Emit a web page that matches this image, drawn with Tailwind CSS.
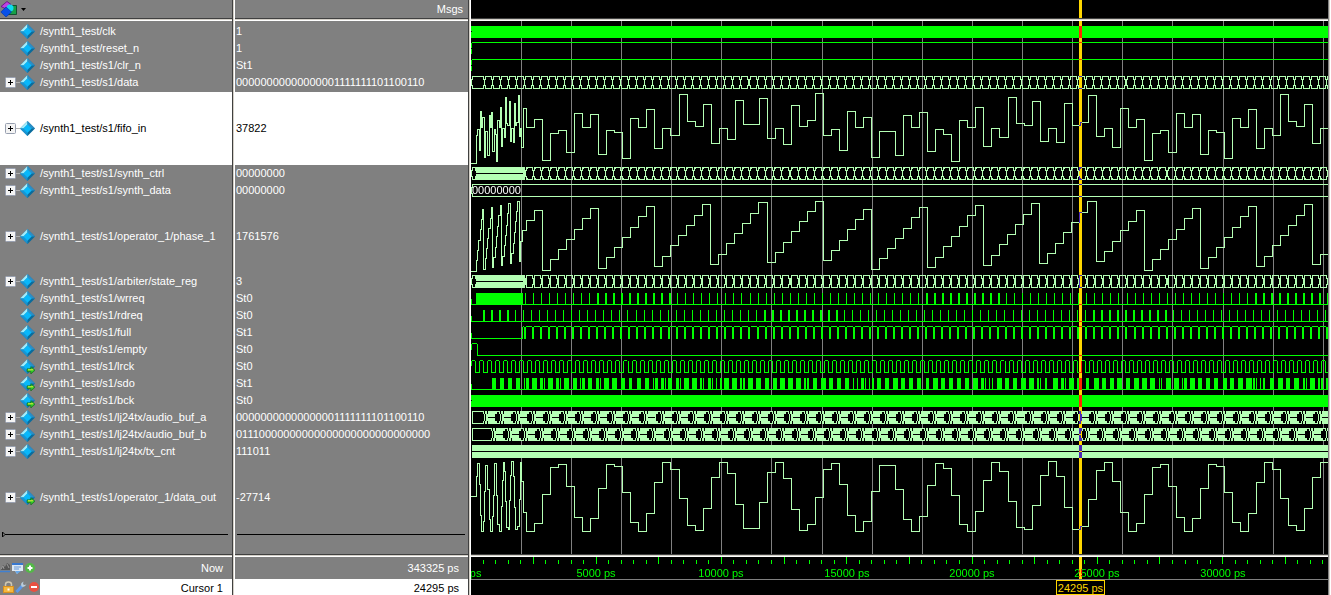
<!DOCTYPE html>
<html lang="en">
<head>
<meta charset="utf-8">
<title>Wave</title>
<script src="https://cdn.jsdelivr.net/npm/@tailwindcss/browser@4"></script>
</head>
<body class="bg-black">
<svg class="hidden" aria-hidden="true">
  <symbol id="gem" viewBox="0 0 16 16">
    <path d="M8 0 16 8 8 16 0 8Z" fill="#0a6c9c"/>
    <path d="M8 0 8 4 4 8 0 8Z" fill="#a4ecfa"/>
    <path d="M8 0 16 8 12 8 8 4Z" fill="#2c8fc6"/>
    <path d="M0 8 4 8 8 12 8 16Z" fill="#1a94d2"/>
    <path d="M8 3.5 12.5 8 8 12.5 3.5 8Z" fill="#08b8fa"/>
  </symbol>
  <symbol id="gem-out" viewBox="0 0 16 16">
    <use href="#gem"/>
    <path d="M7.500 10.500H11.500V8L16 12 11.500 16V13.500H7.500Z" fill="#30c828" stroke="#0a5c18" stroke-width=".6"/>
    <path d="M8.500 11.500H14" stroke="#f0f040"/>
  </symbol>
</svg>

<main class="flex h-screen min-h-[595px] overflow-hidden bg-black font-['Liberation_Sans',Arial,sans-serif] text-[11px] leading-[17px] text-white">

  <!-- Signal names -->
  <section class="flex w-[232px] shrink-0 flex-col bg-[#808080]" aria-label="Signals">
    <header class="flex h-[18px] shrink-0 items-center">
      <button class="flex items-center gap-[3px]" aria-label="Format menu">
        <svg class="h-4 w-[18px]" viewBox="0 0 18 16">
          <path d="M9 4.500H16.500V13.500H8V8Z" fill="#18a048" stroke="#084020" stroke-width=".8"/>
          <path d="M1 5.500 7 .5 11 3.500 6 8Z" fill="#c040e0" stroke="#600880" stroke-width=".8"/>
          <circle cx="10" cy="7" r="3.500" fill="#10d8f0"/>
          <path d="M6 6 11.500 11 6 16 .8 11Z" fill="#0850e8" stroke="#0030a0" stroke-width=".6"/>
        </svg>
        <svg class="mt-px h-[3px] w-[5px]" viewBox="0 0 5 3"><path d="M0 0H5L2.500 3Z"/></svg>
      </button>
    </header>
    <div class="h-[3px] shrink-0 border-t border-b border-t-[#404040] border-b-white bg-[#d4d0c8]"></div>
    <ul id="names" class="shrink-0 pt-[2px]"></ul>
    <div class="flex-1">
      <svg class="-mt-[2px] h-[5px] w-full" aria-hidden="true"><path d="M2.500 0V5L5 2.500 2.500 0M5 2.500H228" fill="none" stroke="#000"/></svg>
    </div>
    <div class="h-[3px] shrink-0 border-t border-b border-t-[#404040] border-b-white bg-[#d4d0c8]"></div>
    <footer class="shrink-0">
      <div class="flex h-[22px] items-center pr-[9px]">
        <div class="flex w-10">
          <button aria-label="Find"><svg class="h-3 w-3" viewBox="0 0 12 12"><path d="M1 8 3 3 5 5 7 1 10 3V8Z" fill="#555"/><path d="M1 7 3 4 4 7M7 2 9 6" stroke="#999" fill="none"/><path d="M0 9.500H10" stroke="#4080d0" stroke-width="1.500"/></svg></button>
          <button aria-label="Edit grid"><svg class="h-3 w-3" viewBox="0 0 12 12"><path d="M0 1H11V9H7L5 12 3 9H0Z" fill="#dce8f4"/><path d="M0 1H11V3H0Z" fill="#3878d0"/><path d="M2 5H9M2 7H7" stroke="#6898d8"/><path d="M3 9H9L5 12Z" fill="#68a8e8"/></svg></button>
          <button aria-label="Add cursor"><svg class="h-3 w-3" viewBox="0 0 12 12"><circle cx="6" cy="6" r="5" fill="#54b848"/><path d="M6 3.500V8.500M3.500 6H8.500" stroke="#fff" stroke-width="2"/></svg></button>
        </div>
        <span class="ml-auto">Now</span>
      </div>
      <div class="flex h-4 items-center bg-white pr-[9px] text-black">
        <div class="flex h-4 w-10 items-center gap-px bg-[#808080] pl-[3px]">
          <button aria-label="Lock cursor"><svg class="h-3 w-[11px]" viewBox="0 0 11 12"><path d="M2.500 6V3.500A3 2.500 0 0 1 8.500 3.500V5" fill="none" stroke="#d0c8b0" stroke-width="1.500"/><rect x=".5" y="5.500" width="10" height="6" fill="#f4b840" stroke="#d89020"/><path d="M5.500 7.500V9.500" stroke="#fff" stroke-width="2"/></svg></button>
          <button aria-label="Edit cursor"><svg class="h-3 w-3" viewBox="0 0 12 12"><path d="M1.500 11 7 5" stroke="#5c98e8" stroke-width="3"/><path d="M8.500 .5Q5 2 6.500 5.500 9 7 11.500 3.500L9 4 8 3Z" fill="#b8ccdc"/></svg></button>
          <button aria-label="Remove cursor"><svg class="h-3 w-3" viewBox="0 0 12 12"><circle cx="6" cy="6" r="5" fill="#e85040"/><path d="M3 6H9" stroke="#fff" stroke-width="2"/></svg></button>
        </div>
        <span class="ml-auto pt-[2px]">Cursor 1</span>
      </div>
    </footer>
  </section>
  <div class="w-[3px] shrink-0 border-r border-l border-r-white border-l-[#404040] bg-[#d4d0c8]"></div>

  <!-- Values at the cursor -->
  <section class="flex w-[233px] shrink-0 flex-col bg-[#808080]" aria-label="Values">
    <header class="h-[18px] shrink-0 pt-px pr-[5px] text-right">Msgs</header>
    <div class="h-[3px] shrink-0 border-t border-b border-t-[#404040] border-b-white bg-[#d4d0c8]"></div>
    <ul id="values" class="shrink-0 pt-[2px]"></ul>
    <div class="flex-1">
      <svg class="-mt-[2px] h-[5px] w-full" aria-hidden="true"><path d="M2 2.500H230" stroke="#000"/></svg>
    </div>
    <div class="h-[3px] shrink-0 border-t border-b border-t-[#404040] border-b-white bg-[#d4d0c8]"></div>
    <footer class="shrink-0 text-right">
      <div class="flex h-[22px] items-center justify-end pr-[9px]">343325 ps</div>
      <div class="flex h-4 items-center justify-end bg-white pt-[2px] pr-[9px] text-black">24295 ps</div>
    </footer>
  </section>
  <div class="w-[3px] shrink-0 border-r border-l border-r-white border-l-[#404040] bg-[#d4d0c8]"></div>

  <!-- Waveforms -->
  <section class="relative isolate flex min-w-0 flex-1 flex-col overflow-hidden bg-black" aria-label="Waveforms">
    <div class="h-[18px] shrink-0"></div>
    <div class="relative z-10 h-[3px] shrink-0 border-t border-b border-t-[#404040] border-b-white bg-[#d4d0c8]"></div>
    <div class="min-h-0 flex-1 overflow-hidden">
      <svg id="waves" width="857" height="533" viewBox="471 21 857 533" shape-rendering="crispEdges" fill="none"></svg>
    </div>
    <div class="relative z-10 h-[3px] shrink-0 border-t border-b border-t-[#404040] border-b-white bg-[#d4d0c8]"></div>
    <div class="h-[22px] shrink-0 overflow-hidden">
      <svg id="ruler" width="857" height="22" viewBox="471 557 857 22" fill="#00ff00"></svg>
    </div>
    <div class="h-4 shrink-0 border-t border-[#808080]"></div>
    <div class="absolute top-0 bottom-4 left-[608px] w-[3px] bg-[#ffd700] mix-blend-difference"></div>
    <div class="absolute bottom-0 left-[585px] flex h-[15px] w-[49px] items-center justify-center border border-[#ffd700] bg-black pt-[2px] text-[#ffd700]">24295 ps</div>
  </section>
  <div class="w-[3px] shrink-0 border-r border-l border-r-white border-l-[#808080] bg-[#d4d0c8]"></div>
</main>

<script>
// name, value, expandable, output, tall (analog), selected
const signals = [
  ['/synth1_test/clk', '1'],
  ['/synth1_test/reset_n', '1'],
  ['/synth1_test/s1/clr_n', 'St1'],
  ['/synth1_test/s1/data', '00000000000000001111111101100110', 1],
  ['/synth1_test/s1/fifo_in', '37822', 1, 0, 1, 1],
  ['/synth1_test/s1/synth_ctrl', '00000000', 1],
  ['/synth1_test/s1/synth_data', '00000000', 1],
  ['/synth1_test/s1/operator_1/phase_1', '1761576', 1, 0, 1],
  ['/synth1_test/s1/arbiter/state_reg', '3', 1],
  ['/synth1_test/s1/wrreq', 'St0'],
  ['/synth1_test/s1/rdreq', 'St0'],
  ['/synth1_test/s1/full', 'St1'],
  ['/synth1_test/s1/empty', 'St0'],
  ['/synth1_test/s1/lrck', 'St0', 0, 1],
  ['/synth1_test/s1/sdo', 'St1', 0, 1],
  ['/synth1_test/s1/bck', 'St0', 0, 1],
  ['/synth1_test/s1/lj24tx/audio_buf_a', '00000000000000001111111101100110', 1],
  ['/synth1_test/s1/lj24tx/audio_buf_b', '01110000000000000000000000000000', 1],
  ['/synth1_test/s1/lj24tx/tx_cnt', '111011', 1],
  ['/synth1_test/s1/operator_1/data_out', '-27714', 1, 1, 1],
];
const rowClass = (tall, selected) =>
  'flex items-center ' + (selected ? 'mt-px h-[73px] bg-white text-black' : tall ? 'h-[74px] pt-px' : 'h-[17px]');
const plus = name => `<button class="ml-[5px] h-[11px] w-[11px]" aria-label="Expand ${name}"><svg class="h-[11px] w-[11px]" viewBox="0 0 11 11"><rect x=".5" y=".5" width="10" height="10" rx="1" fill="#f4f4f4" stroke="#98a0b0"/><path d="M3 5.500H8M5.500 3V8" stroke="#000"/></svg></button><span class="h-px w-1 bg-[#b0b0b0]"></span>`;
document.getElementById('names').innerHTML = signals.map(([n, v, exp, out, tall, sel]) =>
  `<li class="${rowClass(tall, sel)}">${exp ? plus(n) : '<span class="w-5"></span>'}<svg class="h-[15px] w-[15px]"><use href="#${out ? 'gem-out' : 'gem'}"/></svg><span class="pl-[5px] whitespace-nowrap">${n}</span></li>`).join('');
document.getElementById('values').innerHTML = signals.map(([n, v, exp, out, tall, sel]) =>
  `<li class="${rowClass(tall, sel)}"><span class="pl-px">${v}</span></li>`).join('');

const GREEN = '#00ff00', PALE = '#b4ffb4', END = 1328, STEP = 8.0215;
const order = [];
function box(color, x, y, w, h) {
  x = Math.floor(x);
  if (x >= END) return;
  order.push([color, `M${x} ${y}h${Math.min(w, END - x)}v${h}h${-Math.min(w, END - x)}z`]);
}
function flush() {
  let out = '', last = null, d = '';
  for (const [c, p] of order) {
    if (c !== last && d) { out += `<path fill="${last}" d="${d}"/>`; d = ''; }
    last = c; d += p;
  }
  return out + `<path fill="${last}" d="${d}"/>`;
}

// grid
for (let k = 0; k < 17; k++) box('#808080', 521.3 + 50.13 * k, 21, 1, 533);

// clocks and constant levels
box(GREEN, 471, 26, 857, 12);
box(GREEN, 472, 42, 856, 1); box(GREEN, 471, 43, 1, 11);
box(GREEN, 472, 59, 856, 1); box(GREEN, 471, 60, 1, 11);
box(GREEN, 471, 395, 857, 12);
box('#000', 471, 31, 1, 1); box('#000', 471, 400, 1, 1);
box('#000', 471, 48, 1, 1); box('#000', 471, 65, 1, 1);

// bus cells with crossing edges
function cell(y, x0, x1) {
  x0 = Math.floor(x0); x1 = Math.floor(x1);
  const w = x1 - x0;
  box(PALE, x0, y, w, 1); box(PALE, x0, y + 12, w, 1);
  box(PALE, x0, y, 1, 4); box(PALE, x0, y + 9, 1, 4);
  box(PALE, x0 - 1, y + 3, 1, 7);
  if (x1 < END) {
    box(PALE, x1 - 1, y, 1, 4); box(PALE, x1 - 1, y + 9, 1, 4);
    box(PALE, x1, y + 3, 1, 7);
  }
}
cell(76, 472, 484);
for (let k = 0; k < 106; k++) cell(76, 485.3 + STEP * k, 492.3 + STEP * k);
for (const y of [167, 275]) {
  cell(y, 472, 476);
  box(PALE, 476, y, 49, 13); box('#000', 476, y + 6, 47, 1);
  for (let k = 0; k < 101; k++) {
    const x = 526.3 + STEP * k;
    cell(y, x, x + 7);
    if (y === 275) box(PALE, x, y + 3, 1, 7);
    else { box(PALE, x + 1, y + 1, 1, 1); box(PALE, x + 1, y + 11, 1, 1); }
  }
}
box(PALE, 472, 184, 856, 1); box(PALE, 472, 196, 856, 1); box(PALE, 472, 184, 1, 4); box(PALE, 472, 193, 1, 4); box(PALE, 471, 187, 1, 7);

// write / read requests
box(GREEN, 471, 304, 857, 1); box(GREEN, 471, 299, 1, 5); box(GREEN, 476, 293, 47, 11);
for (let k = 0; k < 101; k++) box(GREEN, 525.4 + STEP * k, 293, (k > 8 && k < 19) || (k > 49 && k < 60) || k > 90 && k < 100 ? 2 : 1, 11);
box(GREEN, 471, 321, 857, 1); box(GREEN, 471, 316, 1, 5);
for (let k = 0; k < 106; k++) box(GREEN, 483.6 + STEP * k, 310, k < 4 || (k > 34 && k < 45) || (k > 75 && k < 86) ? 2 : 1, 11);

// fifo full / empty
box(GREEN, 471, 333, 1, 6); box(GREEN, 471, 338, 51, 1); box(GREEN, 522, 327, 1, 12); box(GREEN, 523, 326, 1, 1); box(GREEN, 524, 327, 2, 12);
for (let k = 0; k < 100; k++) {
  box(GREEN, 526.4 + STEP * k, 326, 6, 1);
  box(GREEN, 532.4 + STEP * k, 327, 2, 12);
}
box(GREEN, 471, 344, 1, 6); box(GREEN, 472, 343, 5, 1); box(GREEN, 477, 344, 1, 12); box(GREEN, 477, 355, 851, 1);

// lrck
box(GREEN, 471, 361, 1, 5); box(GREEN, 472, 360, 3, 1);
for (let k = 0; k < 107; k++) {
  const x = Math.floor(475.6 + STEP * k);
  box(GREEN, x, 361, 1, 12); box(GREEN, x, 372, 4, 1);
  box(GREEN, x + 4, 361, 1, 12); box(GREEN, x + 5, 360, 3, 1);
}

// sdo
box(GREEN, 471, 389, 857, 1); box(GREEN, 471, 384, 1, 5);
('492:4 500:4 508:4 516:4 524:1 526:3 532:5 540:3 544:1 548:5 556:3 560:1 564:5 573:4 580:1 582:3 588:4 596:3 600:1 604:5 612:5 621:4 629:3 637:4 645:4 653:1 655:3 661:3 665:1 668:4 676:3 ' +
 '680:1 684:5 692:5 700:2 703:1 708:3 712:1 716:1 720:2 724:5 732:5 740:2 743:2 748:5 756:5 765:4 773:4 780:5 788:5 796:5 804:2 807:2 813:4 821:5 829:4 837:4 845:4 853:1 857:1 861:3 865:1 869:1 872:2 877:4 885:4 893:5 901:4 909:4 917:4 926:3 933:5 941:4 949:4 957:4 965:4 973:5 981:3 985:1 989:1 992:1 997:5 ' +
 '1005:4 1013:4 1021:5 1029:5 1037:2 1040:1 1045:2 1053:5 1061:3 1065:1 1069:5 1077:5 1086:3 1094:5 1102:4 1110:4 1117:5 1126:4 1134:5 1142:5 1150:5 1159:1 1161:1 1166:5 1174:5 1182:1 1184:3 1190:5 1198:4 1206:4 1214:4 1223:4 1230:4 1238:5 1246:6 1253:2 1256:1 1260:1 1263:2 1270:4 1278:5 1286:4 1294:5 1303:2 1306:1 1310:5 1318:2 1321:2 1326:2')
  .split(' ').forEach(s => { const [x, w] = s.split(':').map(Number); box(GREEN, x, 378, w, 11); });

// shift buffers
function buffer(y, firstEnd, lens) {
  box(PALE, 472, y, 856, 13);
  box('#000', 473, y + 1, firstEnd - 474, 11);
  box('#000', firstEnd - 1, y + 3, 1, 7);
  for (let k = -1; k < 53; k++) {
    const x = Math.floor(lens + 16.043 * k);
    if (x > firstEnd) {
      box('#000', x, y + 3, 4, 7); box('#000', x + 1, y + 1, 2, 11);
      box('#000', x - 1, y + 3, 1, 7);
    }
    if (x + 5 >= firstEnd) {
      box('#000', x + 4, y, 1, 3); box('#000', x + 4, y + 10, 1, 3);
      box('#000', x + 5, y + 3, 1, 7);
      box('#000', x + 7, y, 1, 3); box('#000', x + 7, y + 10, 1, 3);
    }
    if (x + 8 > firstEnd) box('#000', x + 8, y + 6, 7, 1);
  }
}
buffer(411, 484, 496.600);
buffer(428, 492, 504.600);
box(PALE, 472, 445, 856, 13); box('#000', 472, 451, 856, 1);

// analog traces: head is x:y pairs, steps are the sampled levels that follow
function analog(startY, head, steps, at) {
  let d = `M471 ${startY + .5}`;
  head.trim().split(' ').forEach(p => { const [x, y] = p.split(':').map(Number); d += `H${x + .5}V${y + .5}`; });
  steps.trim().split(/\s+/).forEach((y, k) => { d += `H${at(k) + .5}V${+y + .5}`; });
  return `<path stroke="${PALE}" d="${d}H${END}"/>`;
}
const even = k => 526 + 8 * k + (k > 18) + (k > 59);
const phaseAt = k => 526 + 8 * k + (k > 29) + (k > 70);
const fifo = analog(163, '476:135 477:129 479:150 480:111 481:127 482:117 484:157 485:131 487:155 489:115 490:127 491:112 492:151 494:129 495:134 496:161 497:120 499:127 500:107 501:146 502:128 504:137 505:97 506:123 507:125 509:101 510:141 511:128 513:142 514:103 515:125 516:122 518:95 519:136 520:128 521:147 523:108',
  `127 119 160 133 130 152 113 127 114 154 130 132 158 118 127 109 148 128 135 94
   121 126 104 143 128 139 100 124 124 98 138 128 144 105 126 120 93 135 129 150 111 127 117 157 131 131 155 115 127 112 151 129 134 161 120 127 107 146 128 137
   97 123 125 101 141 128 142 103 125 122 95 136 128 147 108 127 119 160 133 130 152 113 127 114 154 130 132 158 118 127 109 148 128 135 94 121 126 104 143 128`, even);
const phase = analog(271, '476:260 477:250 478:240 480:229 481:219 482:209 483:269 485:258 486:248 487:238 488:228 490:218 491:207 492:267 493:257 495:247 496:236 497:226 498:215 500:205 501:265 502:256 504:245 505:235 506:225 507:213 508:203 510:263 511:253 513:243 514:232 515:221 516:211 517:201 519:261 520:241 522:230',
  `220 210 270 259 249 239 229 218 208 268 257 247 237 227 216 206 266 256 245 235
   225 215 204 264 254 243 233 223 213 202 262 252 242 231 221 211 201 260 250 240 229 219 209 269 258 248 238 228 217 207 267 257 246 236 226 215 205 265 255 244
   234 224 214 203 263 253 243 232 222 212 201 261 251 241 230 221 210 270 259 249 239 229 218 208 268 257 247 237 227 216 206 266 256 245 235 225 215 204 264 254`, phaseAt);
const output = analog(496, '476:476 477:463 479:484 480:515 481:531 483:521 484:491 485:465 487:489 489:519 490:531 492:516 493:495 494:463 496:467 496:495 497:524 499:531 501:506 502:480 503:462 504:471 505:501 506:527 508:529 509:500 510:475 511:461 513:476 514:507 515:529 517:526 519:499 520:470 520:462 521:481 523:512',
  `531 523 494 467 464 486 517 531 518 488 464 466 492 522 531 513 482 462 469 498
   525 530 508 477 462 473 504 528 528 502 472 462 478 509 530 524 497 469 463 484 515 531 521 491 465 465 489 519 531 516 485 463 468 495 524 531 511 480 462 471
   501 527 529 505 475 461 476 507 529 526 499 470 462 481 512 531 523 494 467 464 486 517 531 518 488 464 466 492 522 531 513 482 462 469 498 525 530 508 477 462`, even);
document.getElementById('waves').innerHTML = flush() + fifo + phase + output +
  '<text x="472" y="194" fill="#fff" font-size="11">00000000</text>';

// time ruler: one tick per 500 ps, a long one per 2500 ps, a label per 5000 ps
let ruler = '';
for (let i = 1; i <= 68; i++) {
  const x = Math.floor(470.8 + 12.53 * i), long = i % 5 === 0;
  ruler += `<rect x="${x}" y="${long ? 557 : 560}" width="1" height="${long ? 7 : 4}"/>`;
}
for (let t = 0; t <= 30000; t += 5000)
  ruler += `<text x="${Math.round(470.8 + t * 0.02506)}" y="577" font-size="11" text-anchor="middle">${t} ps</text>`;
document.getElementById('ruler').innerHTML = ruler;
</script>
</body>
</html>
